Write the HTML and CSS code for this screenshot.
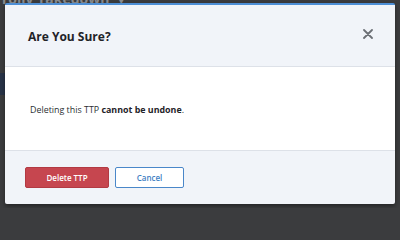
FILE: index.html
```html
<!DOCTYPE html>
<html>
<head>
<meta charset="utf-8">
<link rel="stylesheet" href="styles.css">
</head>
<body>
<div class="backdrop">
  <div class="bg-title">rollv Takedown <span class="caret">▾</span></div>
  <div class="bg-side"></div>
</div>
<div class="modal">
  <div class="modal-header">
    <h2 class="modal-title">Are You Sure?</h2>
    <button class="close" aria-label="Close">
      <svg width="10" height="10" viewBox="0 0 10 10"><path d="M1 1L9 9M9 1L1 9" stroke="#6b6f75" stroke-width="1.8" stroke-linecap="round"/></svg>
    </button>
  </div>
  <div class="modal-body">
    <p>Deleting this TTP <strong>cannot be undone</strong>.</p>
  </div>
  <div class="modal-footer">
    <button class="btn btn-danger">Delete TTP</button>
    <button class="btn btn-outline">Cancel</button>
  </div>
</div>
</body>
</html>
```
FILE: styles.css
```css
html, body {
  margin: 0;
  padding: 0;
}
body {
  width: 400px;
  height: 208px;
  overflow: hidden;
  background: #3b3c3e;
  font-family: "Open Sans", "Liberation Sans", sans-serif;
  padding-top: 3px;
  box-sizing: border-box;
  position: relative;
}
.backdrop {
  position: absolute;
  inset: 0;
}
.bg-title {
  position: absolute;
  left: 2px;
  top: -11px;
  font-size: 14px;
  font-weight: 700;
  color: #8a8c90;
}
.caret {
  font-size: 9px;
  margin-left: 6px;
}
.bg-side {
  position: absolute;
  left: 0;
  top: 73px;
  width: 5px;
  height: 22px;
  background: #283347;
}
.modal {
  position: relative;
  margin-left: 5px;
  width: 390px;
  height: 201px;
  border-top: 2px solid #4d8fd6;
  border-radius: 2px;
  overflow: hidden;
  box-shadow: 0 2px 4px rgba(0,0,0,0.4);
  display: flex;
  flex-direction: column;
  box-sizing: border-box;
}
.modal-header {
  background: #f1f4f9;
  border-bottom: 1px solid #dde1e8;
  display: flex;
  align-items: center;
  justify-content: space-between;
  padding: 2px 22px 0 23px;
  height: 59px;
}
.modal-title {
  margin: 0;
  font-size: 12px;
  font-weight: 700;
  color: #1f2328;
}
.close {
  border: 0;
  background: none;
  padding: 0;
  width: 10px;
  height: 10px;
  display: flex;
  margin-bottom: 6px;
}
.modal-body {
  background: #fff;
  height: 83px;
  display: flex;
  align-items: center;
  padding: 0 25px;
  border-bottom: 1px solid #dde1e8;
}
.modal-body p {
  margin: 2px 0 0;
  font-size: 8.9px;
  color: #2b2f33;
}
.modal-body strong {
  color: #1f2328;
}
.modal-footer {
  flex: 1;
  background: #f1f4f9;
  display: flex;
  align-items: flex-start;
  padding: 16px 20px 0;
  gap: 6px;
}
.btn {
  height: 21px;
  border-radius: 2px;
  font-family: "Open Sans", "Liberation Sans", sans-serif;
  font-size: 8px;
  font-weight: 600;
  padding: 0;
  box-sizing: border-box;
}
.btn-danger {
  width: 84px;
  background: #c6464f;
  border: 1px solid #b23a43;
  color: #fff;
}
.btn-outline {
  width: 69px;
  background: #fff;
  border: 1px solid #4a87c9;
  color: #3f7fc3;
}
```
